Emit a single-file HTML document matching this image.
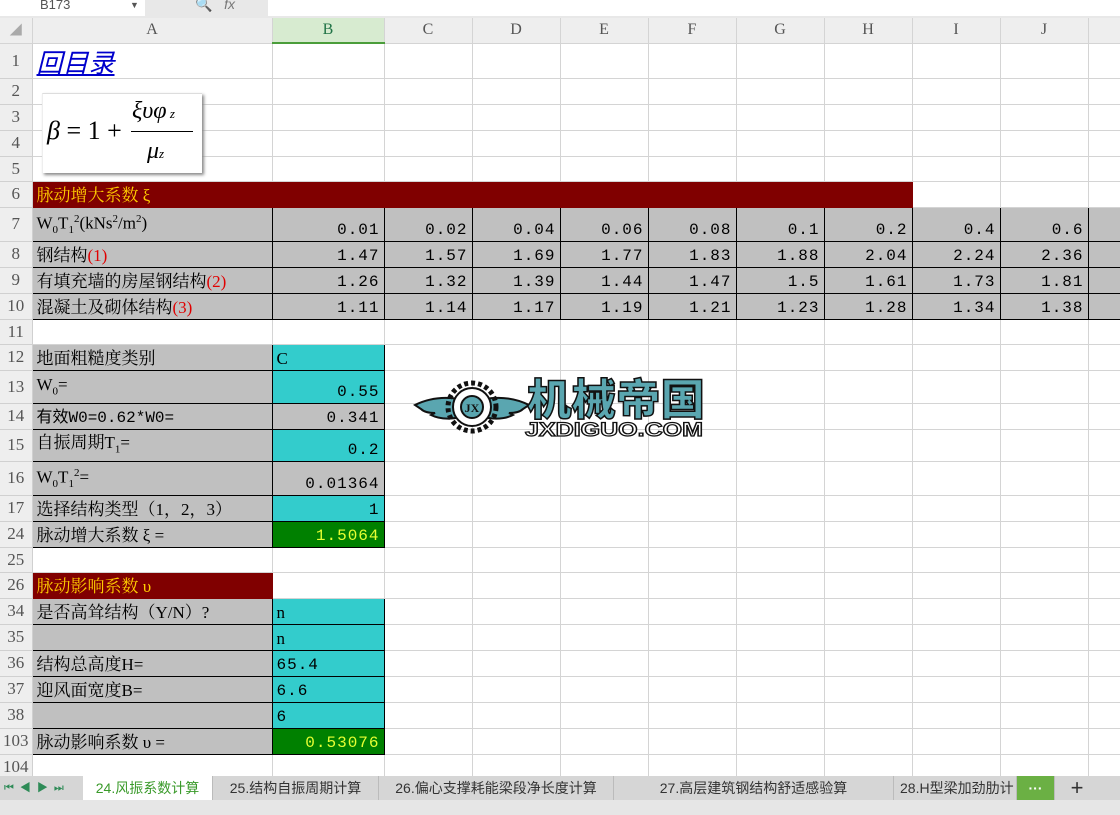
<!DOCTYPE html>
<html><head><meta charset="utf-8">
<style>
*{margin:0;padding:0;box-sizing:border-box}
body{width:1120px;height:815px;overflow:hidden;background:#fff;position:relative;font-family:"Liberation Serif","Noto Serif CJK SC",serif;}
.top{position:absolute;left:0;top:0;width:1120px;height:18px;background:#e8e8e8;}
.nb{position:absolute;left:0;top:0;width:145px;height:16px;background:#fff;font:13px "Liberation Sans",sans-serif;color:#555;padding-left:40px;line-height:10px;overflow:hidden}
.fx{position:absolute;left:268px;top:0;width:852px;height:16px;background:#fff}
table{position:absolute;left:0;top:18px;border-collapse:collapse;table-layout:fixed;width:1120px}
td{border-right:1px solid #d4d4d4;border-bottom:1px solid #d4d4d4;font-size:17px;padding:0 4px;white-space:nowrap;overflow:hidden;vertical-align:bottom;line-height:22px;color:#000}
td.h{background:#eeeeee;color:#555;text-align:center;font-size:17px;padding:0;border-color:#d0d0d0;vertical-align:middle}
tr.hd td{background:#eeeeee;color:#555;text-align:center;vertical-align:middle;font-size:16px}
td.hb{background:#d7ebd0!important;color:#217346!important;border-bottom:2px solid #4a9d3a!important}
.g{background:#c0c0c0;border:1px solid #000}
.c{background:#33cccc;border:1px solid #000}
.dg{background:#008000;border:1px solid #000;color:#e6ff33;text-align:right}
.r{background:#800000;color:#ffcc00;border-color:#800000}
.n{text-align:right;font-family:"Liberation Mono","Noto Sans CJK SC",monospace;font-size:16px;letter-spacing:1px}
.red{color:#e00000}
sub,sup{font-size:11px}
.tabs{position:absolute;left:0;top:776px;width:1120px;height:24px;background:#d6d6d6;font:14px "Liberation Sans","Noto Sans CJK SC",sans-serif;color:#333}
.tab{position:absolute;top:0;height:24px;line-height:24px;text-align:center;border-right:1px solid #bbb;white-space:nowrap;overflow:hidden}
.bot{position:absolute;left:0;top:800px;width:1120px;height:15px;background:#e6e6e6}
</style></head><body>
<div class="top"><div class="nb">B173 <span style="position:absolute;left:130px;font-size:9px">▼</span></div><div style="position:absolute;left:195px;top:-4px;font:14px 'Liberation Sans';color:#777">🔍&nbsp;&nbsp;&nbsp;<i>fx</i></div><div class="fx"></div></div>
<table>
<colgroup><col style="width:32px"><col style="width:240px"><col style="width:112px"><col style="width:88px"><col style="width:88px"><col style="width:88px"><col style="width:88px"><col style="width:88px"><col style="width:88px"><col style="width:88px"><col style="width:88px"><col style="width:32px"></colgroup>
<tr class="hd" style="height:25px"><td style="font-size:12px;color:#aaa">◢</td><td>A</td><td class="hb">B</td><td>C</td><td>D</td><td>E</td><td>F</td><td>G</td><td>H</td><td>I</td><td>J</td><td></td></tr>
<tr style="height:35px"><td class="h">1</td><td style="font-size:26px;line-height:32px;color:#0000cc;font-style:italic;text-decoration:underline;font-family:'Noto Sans CJK SC',sans-serif">回目录</td><td></td><td></td><td></td><td></td><td></td><td></td><td></td><td></td><td></td><td></td></tr>
<tr style="height:26px"><td class="h">2</td><td></td><td></td><td></td><td></td><td></td><td></td><td></td><td></td><td></td><td></td><td></td></tr>
<tr style="height:26px"><td class="h">3</td><td></td><td></td><td></td><td></td><td></td><td></td><td></td><td></td><td></td><td></td><td></td></tr>
<tr style="height:26px"><td class="h">4</td><td></td><td></td><td></td><td></td><td></td><td></td><td></td><td></td><td></td><td></td><td></td></tr>
<tr style="height:25px"><td class="h">5</td><td></td><td></td><td></td><td></td><td></td><td></td><td></td><td></td><td></td><td></td><td></td></tr>
<tr style="height:26px"><td class="h">6</td><td class="r" colspan="8">脉动增大系数 ξ</td><td></td><td></td><td></td></tr>
<tr style="height:32px"><td class="h">7</td><td class="g">W<sub>0</sub>T<sub>1</sub><sup>2</sup>(kNs<sup>2</sup>/m<sup>2</sup>)</td><td class="g n">0.01</td><td class="g n">0.02</td><td class="g n">0.04</td><td class="g n">0.06</td><td class="g n">0.08</td><td class="g n">0.1</td><td class="g n">0.2</td><td class="g n">0.4</td><td class="g n">0.6</td><td class="g"></td></tr>
<tr style="height:26px"><td class="h">8</td><td class="g">钢结构<span class="red">(1)</span></td><td class="g n">1.47</td><td class="g n">1.57</td><td class="g n">1.69</td><td class="g n">1.77</td><td class="g n">1.83</td><td class="g n">1.88</td><td class="g n">2.04</td><td class="g n">2.24</td><td class="g n">2.36</td><td class="g"></td></tr>
<tr style="height:26px"><td class="h">9</td><td class="g">有填充墙的房屋钢结构<span class="red">(2)</span></td><td class="g n">1.26</td><td class="g n">1.32</td><td class="g n">1.39</td><td class="g n">1.44</td><td class="g n">1.47</td><td class="g n">1.5</td><td class="g n">1.61</td><td class="g n">1.73</td><td class="g n">1.81</td><td class="g"></td></tr>
<tr style="height:26px"><td class="h">10</td><td class="g">混凝土及砌体结构<span class="red">(3)</span></td><td class="g n">1.11</td><td class="g n">1.14</td><td class="g n">1.17</td><td class="g n">1.19</td><td class="g n">1.21</td><td class="g n">1.23</td><td class="g n">1.28</td><td class="g n">1.34</td><td class="g n">1.38</td><td class="g"></td></tr>
<tr style="height:25px"><td class="h">11</td><td></td><td></td><td></td><td></td><td></td><td></td><td></td><td></td><td></td><td></td><td></td></tr>
<tr style="height:26px"><td class="h">12</td><td class="g">地面粗糙度类别</td><td class="c">C</td><td></td><td></td><td></td><td></td><td></td><td></td><td></td><td></td><td></td></tr>
<tr style="height:33px"><td class="h">13</td><td class="g">W<sub>0</sub>=</td><td class="c n">0.55</td><td></td><td></td><td></td><td></td><td></td><td></td><td></td><td></td><td></td></tr>
<tr style="height:26px"><td class="h">14</td><td class="g" style="font-family:'Liberation Mono','Noto Sans CJK SC',monospace;font-size:16px">有效W0=0.62*W0=</td><td class="g n">0.341</td><td></td><td></td><td></td><td></td><td></td><td></td><td></td><td></td><td></td></tr>
<tr style="height:32px"><td class="h">15</td><td class="g">自振周期T<sub>1</sub>=</td><td class="c n">0.2</td><td></td><td></td><td></td><td></td><td></td><td></td><td></td><td></td><td></td></tr>
<tr style="height:32px"><td class="h">16</td><td class="g">W<sub>0</sub>T<sub>1</sub><sup>2</sup>=</td><td class="g n">0.01364</td><td></td><td></td><td></td><td></td><td></td><td></td><td></td><td></td><td></td></tr>
<tr style="height:26px"><td class="h">17</td><td class="g">选择结构类型（1，2，3）</td><td class="c n">1</td><td></td><td></td><td></td><td></td><td></td><td></td><td></td><td></td><td></td></tr>
<tr style="height:26px"><td class="h">24</td><td class="g">脉动增大系数 ξ =</td><td class="dg n">1.5064</td><td></td><td></td><td></td><td></td><td></td><td></td><td></td><td></td><td></td></tr>
<tr style="height:25px"><td class="h">25</td><td></td><td></td><td></td><td></td><td></td><td></td><td></td><td></td><td></td><td></td><td></td></tr>
<tr style="height:26px"><td class="h">26</td><td class="r">脉动影响系数 υ</td><td></td><td></td><td></td><td></td><td></td><td></td><td></td><td></td><td></td><td></td></tr>
<tr style="height:26px"><td class="h">34</td><td class="g">是否高耸结构（Y/N）?</td><td class="c">n</td><td></td><td></td><td></td><td></td><td></td><td></td><td></td><td></td><td></td></tr>
<tr style="height:26px"><td class="h">35</td><td class="g"></td><td class="c">n</td><td></td><td></td><td></td><td></td><td></td><td></td><td></td><td></td><td></td></tr>
<tr style="height:26px"><td class="h">36</td><td class="g">结构总高度H=</td><td class="c" style="font-family:'Liberation Mono',monospace;font-size:16px;letter-spacing:1px">65.4</td><td></td><td></td><td></td><td></td><td></td><td></td><td></td><td></td><td></td></tr>
<tr style="height:26px"><td class="h">37</td><td class="g">迎风面宽度B=</td><td class="c" style="font-family:'Liberation Mono',monospace;font-size:16px;letter-spacing:1px">6.6</td><td></td><td></td><td></td><td></td><td></td><td></td><td></td><td></td><td></td></tr>
<tr style="height:26px"><td class="h">38</td><td class="g"></td><td class="c" style="font-family:'Liberation Mono',monospace;font-size:16px">6</td><td></td><td></td><td></td><td></td><td></td><td></td><td></td><td></td><td></td></tr>
<tr style="height:26px"><td class="h">103</td><td class="g">脉动影响系数 υ =</td><td class="dg n">0.53076</td><td></td><td></td><td></td><td></td><td></td><td></td><td></td><td></td><td></td></tr>
<tr style="height:26px"><td class="h">104</td><td></td><td></td><td></td><td></td><td></td><td></td><td></td><td></td><td></td><td></td><td></td></tr>
</table>

<div style="position:absolute;left:42px;top:93px;width:160px;height:80px;background:#fff;box-shadow:2px 2px 3px #888;border-top:1px solid #ddd;border-left:1px solid #eee;font-family:'Liberation Serif',serif;color:#000">
<div style="position:absolute;left:4px;top:22px;font-size:26px"><i>β</i> = 1 +</div>
<div style="position:absolute;left:89px;top:4px;font-size:24px;font-style:italic">ξυφ<span style="font-size:13px"> z</span></div>
<div style="position:absolute;left:88px;top:37px;width:62px;height:1px;background:#000"></div>
<div style="position:absolute;left:104px;top:44px;font-size:24px;font-style:italic">μ<span style="font-size:13px">z</span></div>
</div>

<svg style="position:absolute;left:413px;top:375px" width="295" height="64" viewBox="0 0 295 64">
<path d="M2 30 Q22 20 46 24 L48 42 Q30 46 18 40 L22 38 Q12 38 8 34 Z" fill="#5aa6b0" stroke="#111" stroke-width="2"/>
<path d="M72 24 Q96 20 116 30 L110 34 Q106 38 96 38 L100 40 Q88 46 70 42 Z" fill="#5aa6b0" stroke="#111" stroke-width="2"/>
<circle cx="59" cy="32" r="24" fill="none" stroke="#111" stroke-width="5" stroke-dasharray="4 3"/>
<circle cx="59" cy="32" r="19" fill="#fff" stroke="#111" stroke-width="2"/>
<circle cx="59" cy="32" r="11" fill="#5aa6b0" stroke="#111" stroke-width="2"/>
<text x="59" y="37" font-size="12" font-family="Liberation Serif" font-weight="bold" text-anchor="middle" fill="#111">JX</text>
<text x="114" y="40" font-size="43" font-family="Noto Sans CJK SC,sans-serif" font-weight="900" fill="#5aa6b0" stroke="#111" stroke-width="1.5" textLength="178" lengthAdjust="spacingAndGlyphs">机械帝国</text>
<text x="112" y="61" font-size="19" font-family="Liberation Sans,sans-serif" font-weight="bold" fill="#fff" stroke="#111" stroke-width="1.2" textLength="178" lengthAdjust="spacingAndGlyphs">JXDIGUO.COM</text>
</svg>

<div class="tabs">
<div style="position:absolute;left:4px;top:0;line-height:24px;color:#2e8b57;font-size:11px;letter-spacing:6px">⏮◀▶⏭</div>
<div class="tab" style="left:83px;width:130px;background:#fff;color:#3a9a2a">24.风振系数计算</div>
<div class="tab" style="left:213px;width:166px">25.结构自振周期计算</div>
<div class="tab" style="left:379px;width:235px">26.偏心支撑耗能梁段净长度计算</div>
<div class="tab" style="left:614px;width:280px">27.高层建筑钢结构舒适感验算</div>
<div class="tab" style="left:894px;width:123px;text-align:left;padding-left:6px">28.H型梁加劲肋计</div>
<div class="tab" style="left:1017px;width:38px;background:#6bb044;color:#fff;font-weight:bold">···</div>
<div class="tab" style="left:1062px;width:30px;font-size:22px;border:none">+</div>
</div>
<div class="bot"></div>
</body></html>
